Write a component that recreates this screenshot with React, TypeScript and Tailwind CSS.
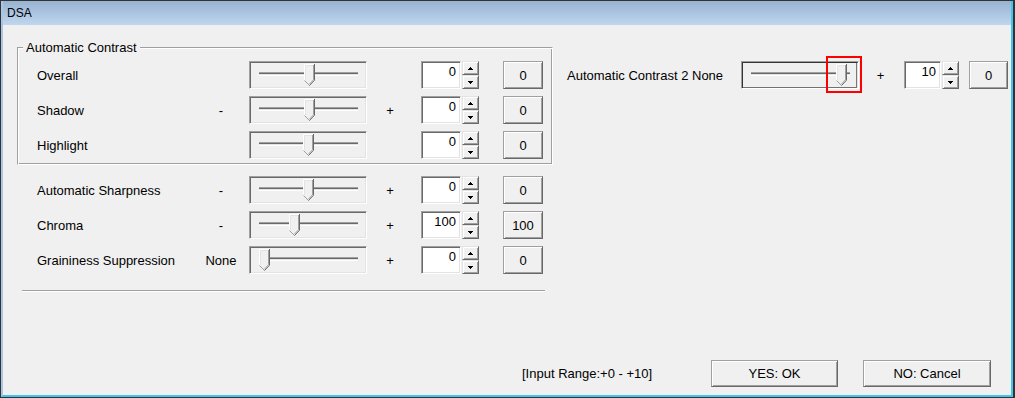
import React from "react";

const raised =
  "bg-[#f0f0f0] border border-t-[#a0a0a0] border-l-[#a0a0a0] border-r-[#696969] border-b-[#696969] shadow-[inset_1px_1px_0_#ffffff,inset_-1px_-1px_0_#a0a0a0]";
const spinBtn =
  "flex-1 flex items-center justify-center bg-[#f0f0f0] border border-t-[#e3e3e3] border-l-[#e3e3e3] border-r-[#696969] border-b-[#696969] shadow-[inset_1px_1px_0_#ffffff,inset_-1px_-1px_0_#a0a0a0]";
const sunken =
  "border border-t-[#a0a0a0] border-l-[#a0a0a0] border-r-white border-b-white shadow-[inset_1px_1px_0_#696969,inset_-1px_-1px_0_#e3e3e3]";

function Slider({ tx, focus }: { tx: number; focus?: boolean }) {
  return (
    <div className={`w-[118px] h-[28px] ${sunken}`}>
      <svg width="116" height="26" className="block">
        {focus && (
          <rect
            x="0.5"
            y="0.5"
            width="114"
            height="25"
            fill="none"
            stroke="#000"
            strokeDasharray="1 1"
          />
        )}
        <line x1="9" y1="10.5" x2="108" y2="10.5" stroke="#a0a0a0" />
        <line x1="9" y1="11.5" x2="108" y2="11.5" stroke="#696969" />
        <line x1="9" y1="12.5" x2="108" y2="12.5" stroke="#e3e3e3" />
        <line x1="9" y1="13.5" x2="108" y2="13.5" stroke="#ffffff" />
        <g transform={`translate(${tx} 0)`}>
          <polygon points="0,2 11,2 11,18 5.5,23.5 0,18" fill="#f0f0f0" />
          <polyline points="0.5,18.5 0.5,2.5 10,2.5" fill="none" stroke="#ffffff" />
          <polyline points="1.5,18 1.5,3.5 9,3.5" fill="none" stroke="#e3e3e3" />
          <line x1="0.5" y1="18.5" x2="5.5" y2="23.5" stroke="#a0a0a0" />
          <polyline points="10.5,2 10.5,18.2 5.5,23.5" fill="none" stroke="#696969" />
          <polyline points="9.5,3 9.5,17.8 5.5,22" fill="none" stroke="#a0a0a0" />
        </g>
      </svg>
    </div>
  );
}

function Up() {
  return (
    <svg width="5" height="3" className="block" shapeRendering="crispEdges">
      <rect x="2" y="0" width="1" height="1" fill="#000" />
      <rect x="1" y="1" width="3" height="1" fill="#000" />
      <rect x="0" y="2" width="5" height="1" fill="#000" />
    </svg>
  );
}

function Down() {
  return (
    <svg width="5" height="3" className="block" shapeRendering="crispEdges">
      <rect x="0" y="0" width="5" height="1" fill="#000" />
      <rect x="1" y="1" width="3" height="1" fill="#000" />
      <rect x="2" y="2" width="1" height="1" fill="#000" />
    </svg>
  );
}

function Spin({ value, wide }: { value: string; wide?: boolean }) {
  return (
    <div className="flex h-[28px]">
      <div
        className={`${
          wide ? "w-[40px]" : "w-[37px]"
        } h-[28px] bg-white text-right pr-[4px] pt-[2px] ${sunken}`}
      >
        {value}
      </div>
      <div className="ml-px w-[17px] h-[28px] flex flex-col">
        <div className={spinBtn}>
          <Up />
        </div>
        <div className={spinBtn}>
          <Down />
        </div>
      </div>
    </div>
  );
}

function Row({
  label,
  left,
  right,
  tx,
  value,
}: {
  label: string;
  left?: string;
  right?: string;
  tx: number;
  value: string;
}) {
  return (
    <div className="flex items-center h-[28px]">
      <div className="w-[162px]">{label}</div>
      <div className="w-[44px] text-center">{left}</div>
      <div className="ml-[6px]">
        <Slider tx={tx} />
      </div>
      <div className="w-[46px] text-center">{right}</div>
      <div className="ml-[8px]">
        <Spin value={value} wide />
      </div>
      <div
        className={`ml-[24px] w-[40px] h-[28px] flex items-center justify-center ${raised}`}
      >
        {value}
      </div>
    </div>
  );
}

export default function App() {
  return (
    <div className="w-[1015px] h-[398px] bg-[#333333] pt-px pl-px pr-[2px] pb-px flex font-['Liberation_Sans',Arial,sans-serif] text-[13px] leading-[15px] text-black overflow-hidden">
      <div className="flex-1 flex flex-col border-l-2 border-l-[#a9c6e6] border-r-2 border-r-[#3ec6f2] border-b-2 border-b-[#3ec6f2]">
        <div className="h-[24px] shrink-0 flex items-center pl-[4px] bg-gradient-to-b from-[#98b3d1] to-[#bfd6ee] text-[12px]">
          DSA
        </div>
        <div className="flex-1 flex flex-col bg-[#f0f0f0]">
          <div className="flex items-start">
            <div className="ml-[14px] mt-[15px] w-[536px] flex flex-col">
              <fieldset className="w-[536px] border border-t-[#a0a0a0] border-l-[#a0a0a0] border-r-white border-b-white shadow-[inset_1px_1px_0_#ffffff,inset_-1px_-1px_0_#a0a0a0]">
                <legend className="ml-[5px] px-[3px] leading-[15px] bg-[#f0f0f0]">
                  Automatic Contrast
                </legend>
                <div className="pl-[19px] pt-[6px] pb-[5px] flex flex-col gap-[7px]">
                  <Row label="Overall" tx={54} value="0" />
                  <Row label="Shadow" left="-" right="+" tx={54} value="0" />
                  <Row label="Highlight" tx={53} value="0" />
                </div>
              </fieldset>
              <div className="mt-[11px] pl-[20px] flex flex-col gap-[7px]">
                <Row label="Automatic Sharpness" left="-" right="+" tx={53} value="0" />
                <Row label="Chroma" left="-" right="+" tx={39} value="100" />
                <Row label="Graininess Suppression" left="None" right="+" tx={9} value="0" />
              </div>
              <div className="mt-[16px] ml-[5px] w-[523px] h-[2px] border-t border-t-[#a0a0a0] border-b border-b-white" />
            </div>
            <div className="ml-[14px] mt-[36px] flex items-center h-[28px]">
              <div className="w-[174px]">Automatic Contrast 2 None</div>
              <div className="relative">
                <Slider tx={94} focus />
                <div className="absolute left-[85px] top-[-5px] w-[36px] h-[37px] border-2 border-[#ff0000]" />
              </div>
              <div className="w-[43px] text-center">+</div>
              <div className="ml-[2px]">
                <Spin value="10" />
              </div>
              <div
                className={`ml-[10px] w-[39px] h-[28px] flex items-center justify-center ${raised}`}
              >
                0
              </div>
            </div>
          </div>
          <div className="flex-1" />
          <div className="flex items-center justify-end pr-[20px] pb-[8px]">
            <div className="w-[189px]">[Input Range:+0 - +10]</div>
            <div
              className={`w-[127px] h-[27px] flex items-center justify-center ${raised}`}
            >
              YES: OK
            </div>
            <div
              className={`ml-[25px] w-[128px] h-[27px] flex items-center justify-center ${raised}`}
            >
              NO: Cancel
            </div>
          </div>
        </div>
      </div>
    </div>
  );
}
